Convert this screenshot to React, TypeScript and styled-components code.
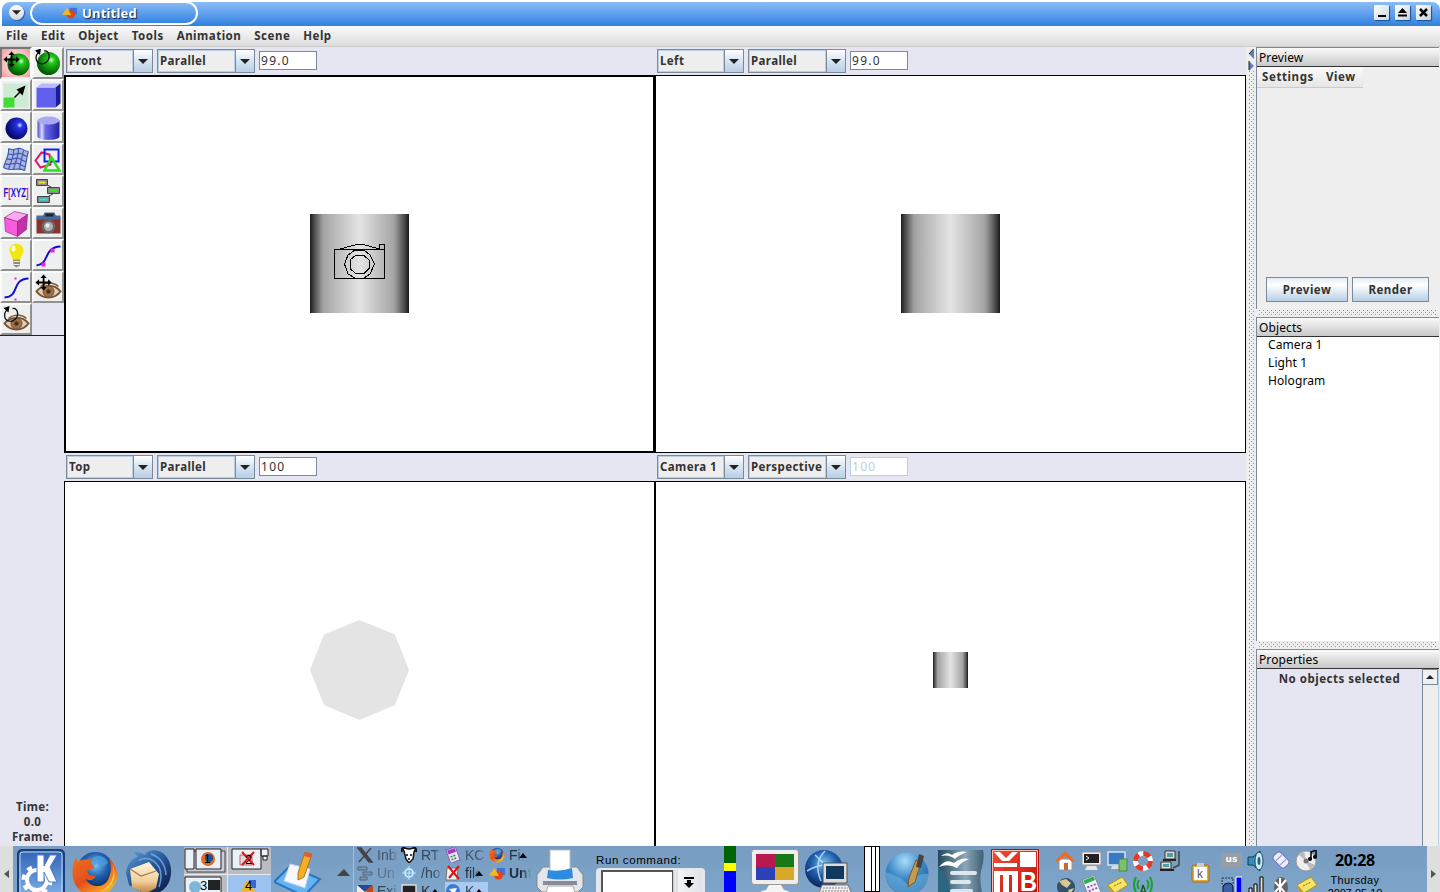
import React from "react";
import styled, { createGlobalStyle, css } from "styled-components";

const GlobalStyle = createGlobalStyle`
  * { box-sizing: border-box; }
  html, body { margin: 0; padding: 0; overflow: hidden; }
  body { font-family: "Noto Sans", "Open Sans", sans-serif; font-size: 12px; color: #000; }
  svg { display: block; flex: none; }
`;

const boldLabel = css`
  font-weight: 700;
  font-size: 11.5px;
  letter-spacing: 0.5px;
  color: #333;
  white-space: nowrap;
`;

const Desktop = styled.div`
  width: 1440px;
  height: 892px;
  display: flex;
  flex-direction: column;
  overflow: hidden;
  background: #fff;
`;

/* ---------- window frame ---------- */

const TitleBar = styled.header`
  height: 26px;
  flex: none;
  padding: 2px 0 0 2px;
  background: #fff;
`;

const TitleFill = styled.div`
  height: 24px;
  display: flex;
  align-items: center;
  padding: 0 9px 3px 0;
  border-radius: 8px 8px 0 0;
  background: linear-gradient(#8bbcf5, #5f9fee 50%, #2f80de);
`;

const RoundButton = styled.div`
  width: 15px;
  height: 15px;
  margin-left: 7px;
  border-radius: 50%;
  background: linear-gradient(#fff, #cfd6de);
  box-shadow: 1px 1px 1px #2c5f9d;
  display: flex;
  align-items: center;
  justify-content: center;
`;

const TitlePill = styled.div`
  width: 168px;
  height: 24px;
  margin-left: 6px;
  border: 2px solid #fff;
  border-radius: 12px;
  display: flex;
  align-items: center;
  padding-left: 30px;
  gap: 5px;
  color: #fff;
  font: 700 13px "Noto Sans", sans-serif;
  letter-spacing: 0.2px;
  text-shadow: 1px 1px 1px #123;
  background: linear-gradient(#86b8f5, #3484e2);
`;

const Spacer = styled.div`
  flex: 1;
`;

const FrameButton = styled.div`
  width: 15px;
  height: 15px;
  margin-left: 6px;
  border-radius: 1px;
  background: linear-gradient(135deg, #fff, #c9d3df);
  box-shadow: 1px 1px 1px #1c4f8d;
`;

const MenuBar = styled.nav`
  height: 21px;
  flex: none;
  display: flex;
  align-items: center;
  gap: 13px;
  padding: 0 0 2px 6px;
  background: linear-gradient(#fafafa, #dcdcdc);
  border-bottom: 1px solid #ccc;
  ${boldLabel}
`;

const Workspace = styled.main`
  flex: 1;
  min-height: 0;
  display: flex;
  background: #e6e6f3;
`;

/* ---------- tool palette ---------- */

const Sidebar = styled.aside`
  width: 64px;
  flex: none;
  display: flex;
  flex-direction: column;
`;

const ToolGrid = styled.div`
  display: grid;
  grid-template-columns: 32px 32px;
  grid-auto-rows: 32px;
  border-bottom: 1px solid #222;
`;

const ToolButton = styled.div<{ $active?: boolean }>`
  display: flex;
  align-items: center;
  justify-content: center;
  border: 2px solid;
  border-color: ${(p) => (p.$active ? "#777 #fff #eee #777" : "#fafafa #909090 #909090 #fafafa")};
  background: ${(p) => (p.$active ? "radial-gradient(#fbe0e0 30%, #f29a9a)" : "#eef0f0")};
`;

const TimeBox = styled.div`
  margin-top: auto;
  padding: 0 0 2px 1px;
  text-align: center;
  line-height: 15px;
  ${boldLabel}
  letter-spacing: 0.3px;
`;

/* ---------- viewports ---------- */

const Viewports = styled.section`
  width: 1182px;
  flex: none;
  display: grid;
  grid-template-columns: 591px 591px;
  grid-template-rows: 406px 406px;
  overflow: hidden;
`;

const Viewport = styled.div`
  display: flex;
  flex-direction: column;
`;

const ViewBar = styled.div`
  height: 28px;
  display: flex;
  align-items: center;
  gap: 4px;
  padding: 0 2px 1px 2px;
`;

const Combo = styled.div<{ $w: number }>`
  width: ${(p) => p.$w}px;
  height: 24px;
  display: flex;
  border: 1px solid #7a8a99;
  background: #eee;
`;

const ComboText = styled.div`
  flex: 1;
  padding-left: 1px;
  line-height: 19px;
  border: 1px solid #b8cfe5;
  ${boldLabel}
  letter-spacing: 0.4px;
`;

const ComboArrow = styled.div`
  width: 19px;
  display: flex;
  align-items: center;
  justify-content: center;
  padding-top: 1px;
  border-left: 1px solid #7a8a99;
  background: linear-gradient(#fff, #dde8f3 40%, #b8cfe5);
`;

const ScaleField = styled.div<{ $off?: boolean }>`
  width: 58px;
  height: 19px;
  margin-bottom: 1px;
  padding-left: 1px;
  line-height: 17px;
  font-size: 12px;
  letter-spacing: 1.3px;
  background: #fff;
  color: ${(p) => (p.$off ? "#b8cfe5" : "#333")};
  border: 1px solid ${(p) => (p.$off ? "#b8cfe5" : "#7a8a99")};
`;

const Canvas = styled.div<{ $active?: boolean; $lift?: boolean }>`
  height: 378px;
  display: flex;
  align-items: center;
  justify-content: center;
  padding-bottom: ${(p) => (p.$lift ? 2 : 0)}px;
  background: #fff;
  border: ${(p) => (p.$active ? 2 : 1)}px solid #000;
`;

/* ---------- right column ---------- */

const dots = css`
  background-color: #eee;
  background-image: conic-gradient(from 270deg at 1px 1px, #8495a8 25%, transparent 0),
    conic-gradient(from 270deg at 1px 1px, #8495a8 25%, transparent 0);
  background-size: 4px 4px;
  background-position: 1px 0, 3px 2px;
`;

const VSplit = styled.div`
  width: 10px;
  flex: none;
  padding: 0 2px;
  background: #eee;
  display: flex;
  flex-direction: column;
`;

const VSplitDots = styled.div`
  flex: 1;
  ${dots}
`;

const HSplit = styled.div`
  height: 8px;
  flex: none;
  padding: 1px 2px;
  background: #eee;
`;

const HSplitDots = styled.div`
  height: 6px;
  ${dots}
`;

const RightColumn = styled.aside`
  flex: 1;
  display: flex;
  flex-direction: column;
  background: #eee;
  padding-right: 1px;
`;

const Panel = styled.section<{ $h?: number; $bg: string }>`
  ${(p) => (p.$h ? `height: ${p.$h}px;` : "flex: 1;")}
  min-height: 0;
  display: flex;
  flex-direction: column;
  border-left: 1px solid #7a8a99;
  border-top: 1px solid #7a8a99;
  background: ${(p) => p.$bg};
`;

const PanelTitle = styled.div`
  height: 19px;
  flex: none;
  padding-left: 2px;
  line-height: 19px;
  letter-spacing: 0.1px;
  background: linear-gradient(#fafafa, #c8c8c8);
  border-bottom: 1px solid #333;
`;

const PanelMenu = styled.div`
  width: 106px;
  height: 21px;
  padding: 0 0 2px 5px;
  display: flex;
  align-items: center;
  gap: 12px;
  background: linear-gradient(#fafafa, #e6e6e6);
  border-bottom: 1px solid #ccc;
  ${boldLabel}
  letter-spacing: 0.6px;
`;

const ButtonRow = styled.div`
  margin-top: auto;
  padding: 0 0 7px 9px;
  display: flex;
  gap: 4px;
`;

const PushButton = styled.div<{ $w: number }>`
  width: ${(p) => p.$w}px;
  height: 25px;
  line-height: 23px;
  text-align: center;
  border: 1px solid #7a8a99;
  background: linear-gradient(#e3ecf5, #fff 30%, #b8cfe5);
  ${boldLabel}
`;

const ObjectRow = styled.div`
  height: 18px;
  line-height: 15px;
  padding-left: 11px;
  letter-spacing: 0.1px;
`;

const PropsBody = styled.div`
  flex: 1;
  display: flex;
`;

const PropsText = styled.div`
  flex: 1;
  text-align: center;
  line-height: 20px;
  ${boldLabel}
`;

const ScrollTrack = styled.div`
  width: 17px;
  border-left: 1px solid #7a8a99;
  border-right: 1px solid #b8cfe5;
  background: #eee;
`;

const ScrollUp = styled.div`
  height: 16px;
  display: flex;
  align-items: center;
  justify-content: center;
  background: #f0f0f0;
  border: 1px solid #7a8a99;
  border-left: 0;
`;

/* ---------- taskbar ---------- */

const Taskbar = styled.footer`
  height: 46px;
  flex: none;
  display: flex;
  align-items: flex-start;
  overflow: hidden;
  background: linear-gradient(#789cc2, #7ea5c9);
`;

const Handle = styled.div`
  width: 13px;
  height: 46px;
  flex: none;
  display: flex;
  align-items: center;
  justify-content: center;
  padding-top: 10px;
  background: #dedede;
`;

const Slot = styled.div<{ $w: number; $gap?: number; $top?: number }>`
  width: ${(p) => p.$w}px;
  flex: none;
  margin-left: ${(p) => p.$gap ?? 0}px;
  padding-top: ${(p) => p.$top ?? 2}px;
`;

const Pager = styled.div`
  display: grid;
  grid-template-columns: 43px 43px;
  grid-template-rows: 27px 27px;
  gap: 1px;
  background: #e8ecf0;
`;

const PagerCell = styled.div<{ $on?: boolean }>`
  background: ${(p) => (p.$on ? "#9cc3f0" : "#b9bcc0")};
`;

const TaskList = styled.div`
  display: grid;
  grid-template-columns: repeat(4, 44px);
  grid-auto-rows: 18px;
  padding-left: 3px;
  border-left: 1px solid #a9bfd6;
`;

const Task = styled.div<{ $color: string; $on?: boolean; $bold?: boolean }>`
  height: 18px;
  width: 43px;
  display: flex;
  align-items: center;
  gap: 4px;
  overflow: hidden;
  font: ${(p) => (p.$bold ? 700 : 400)} 14px "Liberation Sans", Arial, sans-serif;
  white-space: nowrap;
  color: ${(p) => p.$color};
  background: ${(p) => (p.$on ? "#a9caf2" : "transparent")};
`;

const TaskName = styled.span<{ $short?: boolean }>`
  width: ${(p) => (p.$short ? 14 : 22)}px;
  flex: none;
  overflow: hidden;
  mask-image: linear-gradient(90deg, #000 55%, transparent);
`;

const TaskMark = styled.span`
  margin-left: -8px;
  margin-top: 1px;
`;

const RunLabel = styled.div`
  font: 11.5px/16px "Liberation Sans", Arial, sans-serif;
  letter-spacing: 0.62px;
  white-space: nowrap;
`;

const RunBox = styled.div`
  width: 109px;
  height: 32px;
  display: flex;
  padding: 2px 3px 0 5px;
  border-radius: 4px;
  background: #e4e8ec;
`;

const RunInput = styled.div`
  width: 72px;
  border: 2px solid #555;
  border-right-width: 1px;
  background: #fff;
`;

const RunArrow = styled.div`
  flex: 1;
  display: flex;
  justify-content: center;
  padding: 7px 0 0 3px;
  background: linear-gradient(90deg, #cdd3d9 1px, #f3f5f7 2px, #cdd3d9 4px, #f3f5f7 5px, #dfe4e9);
`;

const Stripes = styled.div`
  height: 46px;
  background: linear-gradient(#006400 17px, #ff0 17px, #ff0 25px, #00f 25px);
`;

const Rules = styled.div`
  height: 46px;
  border: 1px solid #000;
  background: linear-gradient(90deg, #fff 6px, #000 6px, #000 7px, #fff 7px, #fff 10px, #000 10px, #000 11px, #fff 11px);
`;

const TrayGrid = styled.div<{ $cols: number; $cell: number }>`
  display: grid;
  grid-template-columns: repeat(${(p) => p.$cols}, ${(p) => p.$cell}px);
  grid-auto-rows: 26px;
  justify-items: center;
`;

const LangBadge = styled.div`
  width: 21px;
  height: 14px;
  margin-top: 3px;
  background: #9a9da6;
  color: #fff;
  text-align: center;
  font: 700 9px/13px "DejaVu Sans", sans-serif;
`;

const Clock = styled.div`
  text-align: center;
  white-space: nowrap;
  font: 11px/13px "Liberation Sans", Arial, sans-serif;
  letter-spacing: 0.4px;
`;

const ClockTime = styled.div`
  height: 26px;
  font: 700 16px/25px "Open Sans", sans-serif;
  letter-spacing: -0.2px;
`;

const ClockDate = styled.div`
  letter-spacing: -0.2px;
`;

/* ---------- drawings ---------- */

const Svg = ({ w, h = w, vb, children }: { w: number; h?: number; vb?: string; children: React.ReactNode }) => (
  <svg width={w} height={h} viewBox={vb ?? `0 0 ${w} ${h}`} fill="none">
    {children}
  </svg>
);

const HiddenSvg = styled.svg`
  position: absolute;
`;

const Defs = () => (
  <HiddenSvg width="0" height="0">
    <defs>
      <radialGradient id="green" cx=".62" cy=".35" r=".6"><stop offset="0" stopColor="#c8ffc0" /><stop offset=".25" stopColor="#22c81c" /><stop offset="1" stopColor="#045c04" /></radialGradient>
      <radialGradient id="blue" cx=".65" cy=".35" r=".6"><stop offset="0" stopColor="#dfe6ff" /><stop offset=".22" stopColor="#2733e8" /><stop offset="1" stopColor="#060a70" /></radialGradient>
      <linearGradient id="cyl"><stop offset="0" stopColor="#4a4ad0" /><stop offset=".2" stopColor="#dcdcff" /><stop offset=".35" stopColor="#6a6af0" /><stop offset="1" stopColor="#2020a0" /></linearGradient>
      <linearGradient id="metal"><stop offset="0" stopColor="#1c1c1c" /><stop offset=".04" stopColor="#484848" /><stop offset=".13" stopColor="#a0a0a0" /><stop offset=".2" stopColor="#b0b0b0" /><stop offset=".5" stopColor="#e4e4e4" /><stop offset=".84" stopColor="#a6a6a6" /><stop offset=".88" stopColor="#8c8c8c" /><stop offset=".96" stopColor="#444" /><stop offset="1" stopColor="#181818" /></linearGradient>
      <linearGradient id="kde" x2="0" y2="1"><stop offset="0" stopColor="#2f62b4" /><stop offset="1" stopColor="#7fb0e8" /></linearGradient>
      <radialGradient id="globe" cx=".5" cy=".35" r=".65"><stop offset="0" stopColor="#7cc4f2" /><stop offset=".5" stopColor="#1f5fae" /><stop offset="1" stopColor="#0a2458" /></radialGradient>
      <linearGradient id="bird" x2=".8" y2="1"><stop offset="0" stopColor="#5fa0dc" /><stop offset=".5" stopColor="#27589c" /><stop offset="1" stopColor="#0c1c48" /></linearGradient>
      <linearGradient id="letter" x2="0" y2="1"><stop offset="0" stopColor="#fff4dc" /><stop offset=".6" stopColor="#f0cf9a" /><stop offset="1" stopColor="#b87a3c" /></linearGradient>
      <linearGradient id="fox" x2=".8" y2="1"><stop offset="0" stopColor="#f0701c" /><stop offset=".5" stopColor="#e4501a" /><stop offset="1" stopColor="#f8c030" /></linearGradient>
      <radialGradient id="pen" cx=".45" cy=".2" r=".8"><stop offset="0" stopColor="#a8dcf8" /><stop offset=".5" stopColor="#3c8ac8" /><stop offset="1" stopColor="#1c5c98" /></radialGradient>
      <linearGradient id="oo"><stop offset="0" stopColor="#23485c" /><stop offset=".6" stopColor="#8ba6b8" /><stop offset="1" stopColor="#3d5f74" /></linearGradient>
      <linearGradient id="red" x2="1" y2="1"><stop offset="0" stopColor="#f05038" /><stop offset="1" stopColor="#c00c08" /></linearGradient>
    </defs>
  </HiddenSvg>
);

const Down = ({ w = 10, h = 5 }: { w?: number; h?: number }) => (
  <Svg w={w} h={h} vb="0 0 10 5"><path d="M0 0H10L5 5Z" fill="#222" /></Svg>
);

const movePath = "M9 1L5.5 5H8V9H4V6.500L0 10L4 13.500V11H8V15H5.500L9 19L12.500 15H10V11H14V13.500L18 10L14 6.500V9H10V5H12.500Z";
const MoveArrows = ({ x = 0, y = 0 }) => <path d={movePath} fill="#000" transform={`translate(${x} ${y}) scale(.9)`} />;
const Turn = ({ x = 0, y = 0 }) => (
  <g transform={`translate(${x} ${y})`}>
    <path d="M5 4C1 7 1 14 6 15.500S16 12 15 7S11 3 10 3" stroke="#111" strokeWidth="1.300" />
    <path d="M1 2.500L7 .5L6 7Z" fill="#000" />
  </g>
);
const Eye = () => (
  <g stroke="#7c5230">
    <path d="M4 20C9 13 22 12 28 20C22 28 10 28 4 20Z" fill="#dccdbd" strokeWidth="2" />
    <circle cx="16" cy="20" r="5.500" fill="#9b7048" /><circle cx="16" cy="20" r="2.200" fill="#4a2c12" />
    <path d="M8 15C14 10 22 11 26 15" strokeWidth="1.300" />
  </g>
);

const toolIcons: React.ReactNode[] = [
  <><circle cx="18" cy="17" r="11" fill="url(#green)" /><MoveArrows x={3} y={3} /></>,
  <><circle cx="16" cy="16" r="11.500" fill="url(#green)" /><Turn x={1.5} y={0.5} /></>,
  <><path d="M3 4H28V28H3Z" fill="#cdebd4" /><path d="M3 18H14V28H3Z" fill="#41dd34" /><path d="M14 18L20 12" stroke="#000" strokeWidth="1.500" /><path d="M25 6L22 16L16 10Z" fill="#000" /></>,
  <><path d="M4 8H23V28H4Z" fill="#6060ec" /><path d="M4 8L9 4H28L23 8Z" fill="#b9b9fb" /><path d="M23 8L28 4V24L23 28Z" fill="#1c1c94" /></>,
  <circle cx="16" cy="17" r="11" fill="url(#blue)" />,
  <><path d="M5 9V25C5 29.500 27 29.500 27 25V9Z" fill="url(#cyl)" /><ellipse cx="16" cy="9" rx="11" ry="4" fill="#a9a9f6" /></>,
  <><path d="M8 5C12 8 16 4 20 5S24 8 28 8C26 13 26 20 24 27C18 23 10 29 3 24C5 16 9 12 8 5Z" fill="#a8b4e4" /><path d="M8 5C12 8 16 4 20 5S24 8 28 8M7 10C12 13 16 9 20 10S24 13 27 13M6 15C10 18 15 13 19 15S23 18 26 18M4 20C9 23 14 18 18 20S22 23 25 23M3 24C10 29 18 23 24 27M8 5C9 12 5 16 3 24M13 6C14 13 10 18 8 26M18 5C18 13 15 18 13 26M23 7C22 13 20 18 19 25M28 8C26 13 26 20 24 27" stroke="#3c55b0" strokeWidth="1.100" /></>,
  <><path d="M3 17L9 9L17 11L18 21L8 24Z" stroke="#e0146c" strokeWidth="2" /><path d="M12 6H26V18H12Z" stroke="#1420f0" strokeWidth="2" /><path d="M19 14L27 27H12Z" stroke="#2be018" strokeWidth="2.500" /></>,
  <text x="3" y="21" fontFamily="Liberation Sans, Arial" fontWeight="700" fontSize="13" textLength="25" lengthAdjust="spacingAndGlyphs" fill="#2010d8">F<tspan fill="#e0107c">[</tspan>XYZ<tspan fill="#e0107c">]</tspan></text>,
  <><path d="M14 9L21 13M21 18L14 22" stroke="#334" /><g fill="#8c8c8c" stroke="#444"><path d="M4 4H15V10H4ZM15 12H27V18H15ZM5 21H17V27H5Z" /></g><path d="M6 7H13" stroke="#fd2" strokeWidth="2" /><path d="M17 15H25" stroke="#3e1" strokeWidth="2" /><path d="M7 24H15" stroke="#1ee" strokeWidth="2" /></>,
  <g stroke="#802070" strokeWidth=".6"><path d="M4 10L17 14V29L5 24Z" fill="#fa5ce0" /><path d="M4 10L14 4L27 7L17 14Z" fill="#fda8f2" /><path d="M17 14L27 7L26 22L17 29Z" fill="#c432a8" /></g>,
  <><path d="M4 10H28V26H4Z" fill="#8b3230" /><path d="M4 8H28V12H4Z" fill="#4b6c9a" /><path d="M10 10L12 5H22L24 10Z" fill="#486a98" /><path d="M13 6H21V9H13Z" fill="#223" /><circle cx="16" cy="19" r="7" fill="#666" /><circle cx="16" cy="19" r="4.500" fill="#b0b0b0" /><circle cx="15" cy="18" r="2" fill="#eee" /></>,
  <><path d="M9 11C9 2 23 2 23 11C23 15 20 16 20 20H12C12 16 9 15 9 11Z" fill="#f2e610" /><ellipse cx="13" cy="9" rx="2" ry="3" fill="#fffcc0" /><path d="M12.500 20H19.500V26L16 28L13 26Z" fill="#9b8a68" /><path d="M13 22H19M13 25H19" stroke="#eee" /></>,
  <><path d="M4 26C18 24 10 8 28 7" stroke="#1010d0" strokeWidth="2" /><path d="M9 23H13V27H9ZM18 9H22V13H18Z" fill="#f020d8" /></>,
  <><path d="M4 26C20 25 10 8 28 7" stroke="#1010d0" strokeWidth="2" /><path d="M14 6H16V8H14ZM14 27H16V29H14Z" fill="#f020d8" /></>,
  <><Eye /><MoveArrows x={3} y={2} /></>,
  <><Eye /><Turn x={2} y={2} /></>,
];

const CameraShape = () => (
  <g stroke="#000" strokeWidth="1" shapeRendering="crispEdges">
    <path d="M24.500 35.500H74.500V64.500H24.500ZM30 35L43 31.500Q50 29 57 31.500L69 35M69.500 35V30.500H74.500V35" />
    <path d="M45 36H54L60 41L64.500 50L60 60L54 64H45L38 60L34.500 50L38 41Z" />
    <path d="M45.500 41.500H54L59 46V54.500L54 59.500H45.500L40 54.500V46Z" />
  </g>
);

const Firefox = ({ w }: { w: number }) => (
  <Svg w={w} vb="0 0 48 48">
    <circle cx="25" cy="21" r="19" fill="url(#globe)" />
    <path d="M22 8C28 4 36 7 38 13L33 17L27 14L22 17Z" fill="#4f9ede" opacity=".7" />
    <path d="M5 8L7 12C10 10 13 9 16 10L21 8C19 11 20 13 22 15L24 18L17 21C16 24 20 27 25 26C24 31 18 32 15 29C18 38 33 40 38 30C42 22 41 15 39 9C47 16 50 27 44 36C36 49 18 50 8 40C0 32 0 18 5 8Z" fill="url(#fox)" />
    <path d="M42 13C46 25 42 37 30 42C42 40 48 28 42 13Z" fill="#fbd33c" />
  </Svg>
);

const Shapes = ({ w = 15 }: { w?: number }) => (
  <Svg w={w} vb="0 0 16 16"><path d="M8 3H16V10H8Z" fill="#3a72e0" /><circle cx="9.500" cy="10" r="4.500" fill="#e04418" /><path d="M5.500 3L10 11L0 10.500Z" fill="#f4b820" /></Svg>
);

const smallIcons: Record<string, React.ReactNode> = {
  x: <path d="M1 1H4L15 15H12ZM14 1L2 15" fill="#444" stroke="#444" strokeWidth="1.500" />,
  gnu: <><path d="M3 4Q0 0 4 1Q8 3 12 1Q16 0 13 5L12 12L8 16L5 12Z" fill="#fff" stroke="#111" strokeWidth="1.500" /><path d="M1 5Q0 0 4 1M15 5Q16 0 12 1" stroke="#111" strokeWidth="2" /><path d="M6 7V9M10 7V9M7 12H9" stroke="#000" strokeWidth="1.500" /></>,
  calc: <g transform="rotate(-20 8 8)"><path d="M3 1H13V15H3Z" fill="#e9e4fa" stroke="#8060b0" /><path d="M4 2H12V6H4Z" fill="#a23ac4" /><path d="M5 9H11M5 12H11" stroke="#3b8a3b" strokeWidth="1.500" strokeDasharray="2 1" /></g>,
  boxes: <g stroke="#50657c" fill="#8094aa"><path d="M1 2H10V5H1ZM6 7H15V10H6ZM3 12H10V15H3Z" /></g>,
  web: <><circle cx="8" cy="8" r="7" fill="#74acd8" /><circle cx="8" cy="8" r="4" stroke="#e4f4fc" strokeWidth="1.500" /><path d="M1 8H15M8 1V15" stroke="#c0e0f4" /></>,
  doc: <><path d="M2 3H13L12 15H1Z" fill="#eee" stroke="#777" /><path d="M3 1L14 14M14 1L4 13" stroke="#e01010" strokeWidth="2" /></>,
  mail: <><path d="M0 2H16V16H0Z" fill="#eee" /><path d="M0 2L8 9L16 2Z" fill="#224a98" /><path d="M8 8L16 2V12Z" fill="#d04410" /></>,
  term: <path d="M1 2H15V14H1Z" fill="#222" stroke="#ddd" strokeWidth="1.500" />,
  k: <><circle cx="8" cy="8" r="7" fill="#3c7cd0" /><path d="M4 6L12 5L9 12Z" fill="#fff" /></>,
};
const Small = ({ id }: { id: string }) => <Svg w={16} vb="0 0 16 16">{smallIcons[id]}</Svg>;

const tasks: { icon: string; name: string; color: string; mark?: boolean; on?: boolean; bold?: boolean }[] = [
  { icon: "x", name: "Inb", color: "#40566e" },
  { icon: "gnu", name: "RT", color: "#32485f" },
  { icon: "calc", name: "KC", color: "#40566e" },
  { icon: "fox", name: "Fi", color: "#203040", mark: true },
  { icon: "boxes", name: "Un", color: "#56708c" },
  { icon: "web", name: "/ho", color: "#32485f" },
  { icon: "doc", name: "file", color: "#203040", mark: true },
  { icon: "shapes", name: "Unt", color: "#203040", bold: true },
  { icon: "mail", name: "Exi", color: "#32485f" },
  { icon: "term", name: "K", color: "#203040", mark: true },
  { icon: "k", name: "K", color: "#32485f", mark: true, on: true },
];

const trayIcons: React.ReactNode[] = [
  <><path d="M4 9H17V20H4Z" fill="#fff" stroke="#999" /><path d="M0 11L10 1L20 11L17 12L10 6L3 12Z" fill="#f06a20" /><path d="M9 13H13V20H9Z" fill="#c86a30" /></>,
  <><path d="M1 2H20V15H1Z" fill="#eee" stroke="#999" /><path d="M3 4H18V13H3Z" fill="#222" /><path d="M5 6L8 8L5 10" stroke="#fff" /><path d="M6 16H15L17 20H4Z" fill="#e4e4e4" /></>,
  <><path d="M1 2H18V15H1Z" fill="#3a78c8" stroke="#d8e4f0" strokeWidth="1.500" /><path d="M5 16H12L14 19H4Z" fill="#ddd" /><path d="M12 9H20V21H12Z" fill="#7cc06c" stroke="#4a8a40" /></>,
  <><circle cx="10" cy="11" r="7.500" stroke="#fff" strokeWidth="5" /><circle cx="10" cy="11" r="7.500" stroke="#e03a2c" strokeWidth="5" strokeDasharray="7 4.800" /></>,
  <><g fill="#ddd" stroke="#333"><path d="M6 1H16V9H6ZM2 12H12V19H2Z" /></g><path d="M8 3H14V7H8ZM4 14H10V17H4Z" fill="#50a0a0" /><path d="M4 10H17M1 20H15" stroke="#222" strokeWidth="2" /><path d="M20 1V15L14 18" stroke="#443" strokeWidth="1.500" /></>,
  <><circle cx="11" cy="11" r="9" fill="#33506c" /><path d="M4 5L11 3L16 7L12 12L7 9ZM13 14L19 12L15 19Z" fill="#d8c890" /></>,
  <g transform="rotate(-22 10 10)"><path d="M4 1H17V21H4Z" fill="#f4f4fc" stroke="#889" /><path d="M5 2H16V6H5Z" fill="#30b050" /><path d="M6 10H15M6 14H15" stroke="#a050b0" strokeWidth="2" strokeDasharray="2 1.500" /></g>,
  <><path d="M1 9L15 1L21 9L8 17Z" fill="#f8e464" stroke="#b09020" /><path d="M1 9L8 17V20L1 12Z" fill="#c8a020" /><path d="M7 10L15 6" stroke="#886a10" strokeDasharray="2 1" /></>,
  <><path d="M10 9L7 20M10 9L14 20M8 16H13" stroke="#145c20" strokeWidth="1.500" /><g stroke="#18a030" strokeWidth="2"><path d="M6 4Q3 9 6 13M14 4Q17 9 14 13M3 1Q-1 9 3 16M17 1Q21 9 17 16" /></g></>,
];

const statusIcons: React.ReactNode[] = [
  <><path d="M2 7H7L14 1V21L7 15H2Z" fill="#3a8cb8" stroke="#0d3c58" /><ellipse cx="13" cy="11" rx="4" ry="9" fill="#cfe8f4" stroke="#15506c" /><ellipse cx="13" cy="11" rx="1.500" ry="4" fill="#246080" /></>,
  <g transform="rotate(45 10 10)"><rect x="2" y="5" width="16" height="10" rx="3" fill="#eef" stroke="#7078c0" /><path d="M7 6V14M13 6V14" stroke="#8890d8" /></g>,
  <><circle cx="10" cy="11" r="10" fill="#eee" stroke="#999" /><path d="M10 11L3 5L8 1ZM10 11L19 15L14 20Z" fill="#bbb" /><circle cx="10" cy="11" r="2.500" fill="#777" /><path d="M15 9V2L20 0V7" stroke="#000" strokeWidth="1.500" /><circle cx="14" cy="9" r="2" fill="#000" /><circle cx="19" cy="7" r="2" fill="#000" /></>,
];

const ViewportPane = ({ view, mode, scale, off, active, lift, children }: {
  view: string; mode: string; scale: string; off?: boolean; active?: boolean; lift?: boolean; children: React.ReactNode;
}) => (
  <Viewport>
    <ViewBar>
      <Combo $w={87}><ComboText>{view}</ComboText><ComboArrow><Down /></ComboArrow></Combo>
      <Combo $w={98}><ComboText>{mode}</ComboText><ComboArrow><Down /></ComboArrow></Combo>
      <ScaleField $off={off}>{scale}</ScaleField>
    </ViewBar>
    <Canvas $active={active} $lift={lift}>{children}</Canvas>
  </Viewport>
);

export default function App() {
  return (
    <Desktop>
      <GlobalStyle />
      <Defs />
      <TitleBar>
        <TitleFill>
          <RoundButton><Down w={9} h={5} /></RoundButton>
          <TitlePill><Shapes />Untitled</TitlePill>
          <Spacer />
          <FrameButton><Svg w={15}><path d="M4 11H12" stroke="#000" strokeWidth="2" /></Svg></FrameButton>
          <FrameButton><Svg w={15}><path d="M3 8L7.500 3L12 8ZM3 9.500H12V11.500H3Z" fill="#000" /></Svg></FrameButton>
          <FrameButton><Svg w={15}><path d="M4 4L11 11M11 4L4 11" stroke="#000" strokeWidth="2.500" /></Svg></FrameButton>
        </TitleFill>
      </TitleBar>
      <MenuBar>
        {["File", "Edit", "Object", "Tools", "Animation", "Scene", "Help"].map((m) => <span key={m}>{m}</span>)}
      </MenuBar>
      <Workspace>
        <Sidebar>
          <ToolGrid>
            {toolIcons.map((icon, i) => (
              <ToolButton key={i} $active={i === 0}><Svg w={28} vb="1.5 1.5 28 28">{icon}</Svg></ToolButton>
            ))}
          </ToolGrid>
          <TimeBox>Time:<br />0.0<br />Frame:</TimeBox>
        </Sidebar>
        <Viewports>
          <ViewportPane view="Front" mode="Parallel" scale="99.0" active lift>
            <Svg w={99}><path d="M0 0H99V99H0Z" fill="url(#metal)" /><CameraShape /></Svg>
          </ViewportPane>
          <ViewportPane view="Left" mode="Parallel" scale="99.0" lift>
            <Svg w={99}><path d="M0 0H99V99H0Z" fill="url(#metal)" /></Svg>
          </ViewportPane>
          <ViewportPane view="Top" mode="Parallel" scale="100">
            <Svg w={99} h={100}><path d="M49.500 0L85 14.500L99 50L85 85L49.500 100L14 85L0 50L14 14.500Z" fill="#e4e4e4" /></Svg>
          </ViewportPane>
          <ViewportPane view="Camera 1" mode="Perspective" scale="100" off>
            <Svg w={35} h={36}><path d="M0 0H35V36H0Z" fill="url(#metal)" /></Svg>
          </ViewportPane>
        </Viewports>
        <VSplit>
          <Svg w={6} h={24}><path d="M6 2V12L1 7Z" fill="#5f7fc4" /><path d="M5.500 2L1 7" stroke="#222" /><path d="M1 14V24L6 19Z" fill="#5f7fc4" /><path d="M1 14V23" stroke="#222" /></Svg>
          <VSplitDots />
        </VSplit>
        <RightColumn>
          <Panel $h={262} $bg="#eee">
            <PanelTitle>Preview</PanelTitle>
            <PanelMenu><span>Settings</span><span>View</span></PanelMenu>
            <ButtonRow>
              <PushButton $w={82}>Preview</PushButton>
              <PushButton $w={77}>Render</PushButton>
            </ButtonRow>
          </Panel>
          <HSplit><HSplitDots /></HSplit>
          <Panel $h={324} $bg="#fff">
            <PanelTitle>Objects</PanelTitle>
            {["Camera 1", "Light 1", "Hologram"].map((o) => <ObjectRow key={o}>{o}</ObjectRow>)}
          </Panel>
          <HSplit><HSplitDots /></HSplit>
          <Panel $bg="#e6e6f3">
            <PanelTitle>Properties</PanelTitle>
            <PropsBody>
              <PropsText>No objects selected</PropsText>
              <ScrollTrack><ScrollUp><Svg w={8} h={4}><path d="M0 4H8L4 0Z" fill="#222" /></Svg></ScrollUp></ScrollTrack>
            </PropsBody>
          </Panel>
        </RightColumn>
      </Workspace>
      <Taskbar>
        <Handle><Svg w={5} h={8}><path d="M5 0V8L0 4Z" fill="#555" /></Svg></Handle>
        <Slot $w={48} $gap={4} $top={3}>
          <Svg w={48} vb="0 0 48 48">
            <rect x="1" y="1" width="46" height="46" rx="4" fill="url(#kde)" stroke="#173f80" strokeWidth="2" />
            <rect x="3" y="3" width="42" height="42" rx="3" stroke="#bcd6f4" />
            <circle cx="20" cy="31" r="10" stroke="#fff" strokeWidth="4" />
            <circle cx="20" cy="31" r="13.500" stroke="#fff" strokeWidth="4" strokeDasharray="5 5.600" />
            <path d="M20 6H27V17L33 6H40L33 18L40 33H32L27 23V33H20Z" fill="#fff" stroke="#4a7cc4" />
          </Svg>
        </Slot>
        <Slot $w={47} $gap={6} $top={4}><Firefox w={47} /></Slot>
        <Slot $w={48} $gap={7} $top={3}>
          <Svg w={48} vb="0 0 48 48">
            <path d="M1 24C2 14 8 9 13 8L9 3C14 3 17 4 20 6C22 1 30 0 36 3C45 8 48 20 45 30C42 41 32 47 20 45L4 36Z" fill="url(#bird)" />
            <path d="M5 20L24 13L34 25L31 39L20 45L7 38Z" fill="url(#letter)" />
            <path d="M5 20L16 27L31 22" stroke="#a87c48" strokeWidth="1.300" />
            <path d="M14 11Q26 6 34 18Q38 26 34 38M26 5Q40 10 41 26" stroke="#7ab2e4" strokeWidth="1.500" opacity=".8" />
          </Svg>
        </Slot>
        <Slot $w={87} $gap={11} $top={1}>
          <Pager>
            <PagerCell><Svg w={43} h={27}><path d="M3 4H41V25H3Z" fill="#ccd" stroke="#444" /><path d="M1 2H10V22H1ZM12 2H37V22H12Z" fill="#e9f0f8" stroke="#222" /><circle cx="24" cy="12" r="7" fill="#e06a28" /><circle cx="25" cy="11" r="4" fill="#24508a" /><text x="20" y="16" fontFamily="Liberation Sans" fontSize="12" fill="#000">1</text></Svg></PagerCell>
            <PagerCell><Svg w={43} h={27}><path d="M4 2H33V22H4ZM33 2H40V9H33ZM35 9H39V13H35Z" fill="#e9f0f8" stroke="#222" /><path d="M12 8H24V18H12Z" fill="#ddd" stroke="#b66" /><path d="M14 5L26 18M26 5L14 18" stroke="#e01818" strokeWidth="2" /><text x="17" y="17" fontFamily="Liberation Sans" fontSize="13" fill="#000">2</text></Svg></PagerCell>
            <PagerCell><Svg w={43} h={27}><path d="M1 2H37V26H1Z" fill="#e9f0f8" stroke="#222" /><circle cx="11" cy="12" r="6" fill="#80b4d8" /><path d="M24 5H36V15H24Z" fill="#222" /><text x="16" y="15" fontFamily="Liberation Sans" fontSize="13" fill="#000">3</text></Svg></PagerCell>
            <PagerCell $on><Svg w={43} h={27}><path d="M21 5H28V13H21Z" fill="#3a66c8" /><path d="M19 5L27 16H13Z" fill="#f0b428" /><text x="17" y="15" fontFamily="Liberation Sans" fontSize="13" fill="#000">4</text></Svg></PagerCell>
          </Pager>
        </Slot>
        <Slot $w={48} $gap={3} $top={3}>
          <Svg w={48} vb="0 0 48 48"><path d="M16 17L46 30L30 47L0 33Z" fill="#62b4f4" stroke="#2c74c0" strokeWidth="2" /><path d="M16 15L36 20L31 39L10 32Z" fill="#f6f8ff" stroke="#c8d0e8" /><path d="M31 3L38 5L30 28L24 31L24 24Z" fill="#f4b024" stroke="#b87410" /><path d="M31 3L38 5L37 9L30 7Z" fill="#e05848" /></Svg>
        </Slot>
        <Slot $w={13} $gap={15} $top={23}><Svg w={13} h={7}><path d="M0 7H13L7 0Z" fill="#444" /></Svg></Slot>
        <Slot $w={180} $gap={3} $top={0}>
          <TaskList>
            {tasks.map((t, i) => (
              <Task key={i} $color={t.color} $on={t.on} $bold={t.bold}>
                {t.icon === "fox" ? <Firefox w={16} /> : t.icon === "shapes" ? <Shapes w={16} /> : <Small id={t.icon} />}
                <TaskName $short={t.mark}>{t.name}</TaskName>
                {t.mark && <TaskMark><Svg w={8} h={5}><path d="M0 5H8L4 0Z" fill="#000" /></Svg></TaskMark>}
              </Task>
            ))}
          </TaskList>
        </Slot>
        <Slot $w={48} $gap={3} $top={3}>
          <Svg w={48} vb="0 0 48 48"><path d="M7 18H41L47 26V38L42 43H6L1 38V26Z" fill="#e4e6ec" stroke="#888" /><path d="M14 1H34V24H14Z" fill="#fff" stroke="#bbb" /><path d="M12 21Q24 23 36 19L37 29Q24 32 11 29Z" fill="#2d8ce0" /><path d="M7 32H41V36H7Z" fill="#888c98" /><path d="M12 37H37L40 48H9Z" fill="#fff" stroke="#aaa" /></Svg>
        </Slot>
        <Slot $w={109} $gap={12} $top={6}>
          <RunLabel>Run command:</RunLabel>
          <RunBox><RunInput /><RunArrow><Svg w={10} h={12}><path d="M0 0H10V2H0ZM3 3H7V6H10L5 11L0 6H3Z" fill="#000" /></Svg></RunArrow></RunBox>
        </Slot>
        <Slot $w={12} $gap={19} $top={0}><Stripes /></Slot>
        <Slot $w={48} $gap={15} $top={3}>
          <Svg w={48} vb="0 0 48 48"><rect x=".5" y=".5" width="47" height="35" rx="3" fill="#eee" stroke="#999" /><path d="M5 5H24V18H5Z" fill="#b81850" /><path d="M24 5H43V18H24Z" fill="#187818" /><path d="M5 18H24V31H5Z" fill="#2c40b8" /><path d="M24 18H43V31H24Z" fill="#d8a828" /><path d="M18 36H30L33 41Q41 42 41 48H7Q7 42 15 41Z" fill="#f4f4f4" /></Svg>
        </Slot>
        <Slot $w={49} $gap={6} $top={3}>
          <Svg w={49} h={48}><circle cx="19" cy="20" r="19" fill="url(#globe)" /><path d="M20 2Q8 14 16 32M2 22Q18 12 36 18M10 6Q24 18 32 34" stroke="#c8ecff" strokeWidth="1.500" opacity=".8" /><path d="M18 14H42V34H18Z" fill="#dcdcdc" stroke="#555" /><path d="M21 17H39V30H21Z" fill="#12385c" /><path d="M17 36H43L48 47H13Z" fill="#ececec" stroke="#777" /><path d="M18 39H43M17 42H44" stroke="#888" strokeDasharray="2 1" /></Svg>
        </Slot>
        <Slot $w={16} $gap={10} $top={0}><Rules /></Slot>
        <Slot $w={44} $gap={5} $top={6}>
          <Svg w={44}><circle cx="22" cy="22" r="21.500" fill="url(#pen)" /><path d="M0 20Q16 24 24 34Q30 20 44 22Q43 42 22 44Q2 42 0 20Z" fill="#6fb0de" opacity=".6" /><path d="M31 8L36 10L30 30L23 35L24 26Z" fill="#c89a50" stroke="#775a28" /><path d="M34 2L39 4L36 16L31 15Z" fill="#444" /></Svg>
        </Slot>
        <Slot $w={48} $gap={8} $top={3}>
          <Svg w={48}><path d="M1 1H46Q48 10 44 22Q42 32 46 48H1Z" fill="url(#oo)" /><path d="M1 18Q12 24 14 48H1Z" fill="#2d6680" /><path d="M2 18Q9 9 17 14Q24 8 32 10Q24 13 20 19Q11 14 2 18ZM4 7Q10 2 15 6Q21 1 30 3Q22 6 18 10Q12 5 4 7Z" fill="#fff" /><path d="M15 24H38M15 33H32M15 42H34" stroke="#dce6ec" strokeWidth="4" strokeLinecap="round" /></Svg>
        </Slot>
        <Slot $w={48} $gap={6} $top={3}>
          <Svg w={48}><path d="M.500 .500H47.500V48H.500Z" fill="url(#red)" stroke="#b01008" /><path d="M1.500 1.500H46.500V48H1.500Z" stroke="#fbc0b0" /><path d="M29 3H45V18H29Z" fill="#fff" /><path d="M3 14H26V18H3ZM3 3H9L15 9L21 3H27L18 12H11Z" fill="#fff" /><path d="M3 22H27V26H3ZM3 22H9V48H3ZM12 22H18V48H12ZM21 22H27V48H21Z" fill="#fff" /><text x="29" y="42" fontFamily="Liberation Sans" fontSize="28" fontWeight="700" fill="#fff" textLength="17" lengthAdjust="spacingAndGlyphs">B</text></Svg>
        </Slot>
        <Slot $w={130} $gap={13} $top={4}>
          <TrayGrid $cols={5} $cell={26}>{trayIcons.map((n, i) => <Svg key={i} w={21} h={22}>{n}</Svg>)}</TrayGrid>
        </Slot>
        <Slot $w={19} $gap={9} $top={17}>
          <Svg w={19} h={20}><rect x="1" y="2" width="17" height="17" rx="2" fill="#e5a63a" stroke="#a87014" /><path d="M3 4H16V17H3Z" fill="#fff" /><path d="M6 0H13V4H6Z" fill="#ccc" /><text x="6" y="15" fontFamily="Liberation Sans" fontSize="12" fill="#555">k</text></Svg>
        </Slot>
        <Slot $w={98} $gap={9} $top={4}>
          <TrayGrid $cols={4} $cell={25}>
            <LangBadge>us</LangBadge>
            {statusIcons.map((n, i) => <Svg key={i} w={21} h={22}>{n}</Svg>)}
            <Svg w={21} h={22}><path d="M1 2H12V8H1Z" stroke="#234" strokeDasharray="2 1" /><path d="M2 10Q8 4 12 10V18H2Z" fill="#385fa8" stroke="#112" /><path d="M15 1H21V22H15Z" fill="#00f" stroke="#fff" /></Svg>
            <Svg w={21} h={22}><path d="M3 12H6V22H3ZM8 8H11V22H8ZM14 1H17V22H14Z" fill="#ddd" stroke="#000" /></Svg>
            <Svg w={21} h={22}><ellipse cx="10" cy="11" rx="7" ry="10" fill="#666" /><path d="M9 2V20M9 11L15 4M9 11L15 18M9 11L4 6M9 11L4 16" stroke="#fff" strokeWidth="2" /></Svg>
            <Svg w={21} h={22}>{trayIcons[7]}</Svg>
          </TrayGrid>
        </Slot>
        <Slot $w={74} $gap={1} $top={2}>
          <Clock><ClockTime>20:28</ClockTime>Thursday<ClockDate>2007-05-10</ClockDate></Clock>
        </Slot>
        <Spacer />
        <Handle><Svg w={5} h={8}><path d="M0 0V8L5 4Z" fill="#555" /></Svg></Handle>
      </Taskbar>
    </Desktop>
  );
}
